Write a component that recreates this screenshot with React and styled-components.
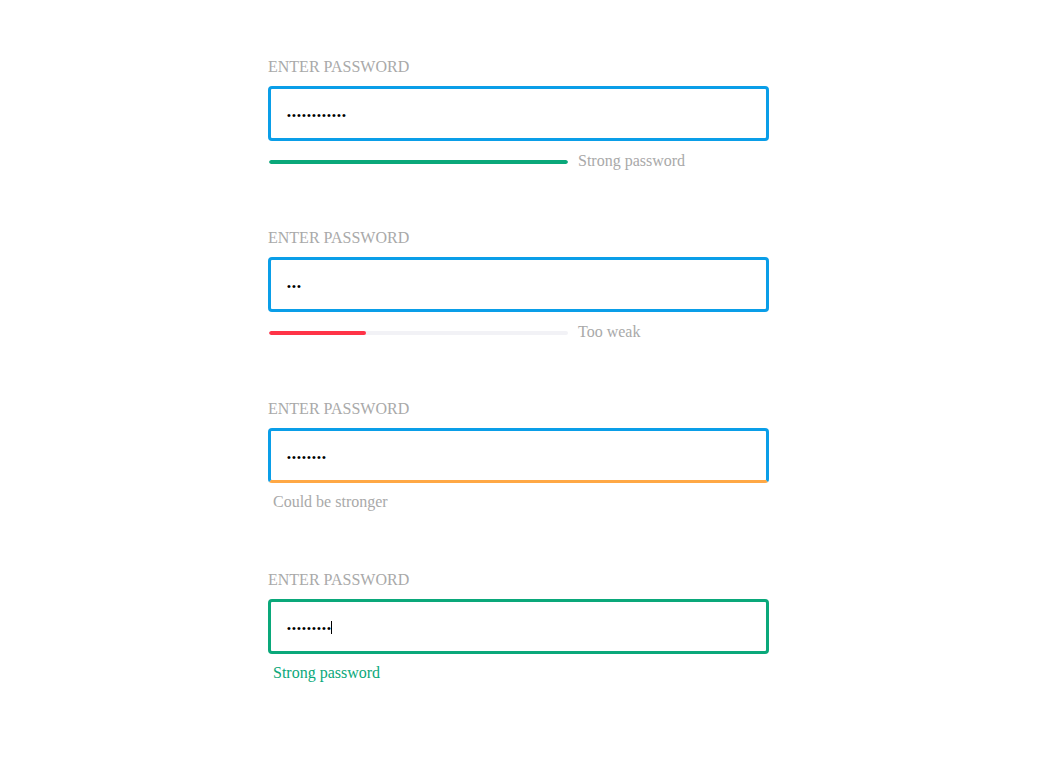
import React from "react";
import styled, { createGlobalStyle } from "styled-components";

const GlobalStyle = createGlobalStyle`
  body {
    margin: 0;
    background: #ffffff;
    font-family: "Liberation Serif", "Times New Roman", serif;
  }
`;

const colors = {
  blue: "#0a9ee8",
  green: "#0aa87a",
  red: "#ff3347",
  orange: "#ffa845",
  gray: "#a9a9a9",
  track: "#f2f2f6",
};

const Page = styled.div`
  display: flex;
  flex-direction: column;
  gap: 59px;
  padding: 58px 0 0 268px;
`;

const Field = styled.div`
  width: 501px;
  display: flex;
  flex-direction: column;
`;

const Label = styled.label`
  font-size: 16px;
  line-height: 18px;
  color: ${colors.gray};
  margin-bottom: 10px;
`;

const Box = styled.div`
  box-sizing: border-box;
  height: 55px;
  border: 3px solid ${(p) => p.$color || colors.blue};
  border-radius: 4px;
  padding: 0 16px;
  display: flex;
  align-items: center;
`;

const Dots = styled.span`
  font-family: "Liberation Sans", Arial, sans-serif;
  font-size: 11px;
  letter-spacing: 1.15px;
  color: #000;
  padding-top: 3px;
`;

const Caret = styled.span`
  display: inline-block;
  width: 1px;
  height: 13px;
  background: #000;
  margin-left: -1px;
  margin-top: 2px;
`;

const Meter = styled.div`
  display: flex;
  align-items: center;
  gap: 10px;
  margin-top: 11px;
  height: 18px;
`;

const Track = styled.div`
  width: 299px;
  margin-left: 1px;
  height: 4px;
  border-radius: 2px;
  background: ${colors.track};
  margin-top: 2px;
  overflow: hidden;
`;

const Fill = styled.div`
  height: 100%;
  border-radius: 2px;
  background: ${(p) => p.$color};
`;

const Hint = styled.span`
  font-size: 16px;
  line-height: 18px;
  color: ${(p) => p.$color || colors.gray};
  margin-top: ${(p) => (p.$below ? "10px" : "0")};
  margin-bottom: ${(p) => (p.$below ? "1px" : "0")};
  padding-left: ${(p) => (p.$below ? "5px" : "0")};
`;

const Password = ({ length, caret }) => (
  <>
    <Dots>{"\u2022".repeat(length)}</Dots>
    {caret && <Caret />}
  </>
);

export default function App() {
  return (
    <>
      <GlobalStyle />
      <Page>
        <Field>
          <Label>ENTER PASSWORD</Label>
          <Box>
            <Password length={12} />
          </Box>
          <Meter>
            <Track>
              <Fill $color={colors.green} style={{ width: "100%" }} />
            </Track>
            <Hint>Strong password</Hint>
          </Meter>
        </Field>

        <Field>
          <Label>ENTER PASSWORD</Label>
          <Box>
            <Password length={3} />
          </Box>
          <Meter>
            <Track>
              <Fill $color={colors.red} style={{ width: "32.5%" }} />
            </Track>
            <Hint>Too weak</Hint>
          </Meter>
        </Field>

        <Field>
          <Label>ENTER PASSWORD</Label>
          <Box style={{ borderBottomColor: colors.orange }}>
            <Password length={8} />
          </Box>
          <Hint $below>Could be stronger</Hint>
        </Field>

        <Field>
          <Label>ENTER PASSWORD</Label>
          <Box $color={colors.green}>
            <Password length={9} caret />
          </Box>
          <Hint $below $color={colors.green}>Strong password</Hint>
        </Field>
      </Page>
    </>
  );
}
